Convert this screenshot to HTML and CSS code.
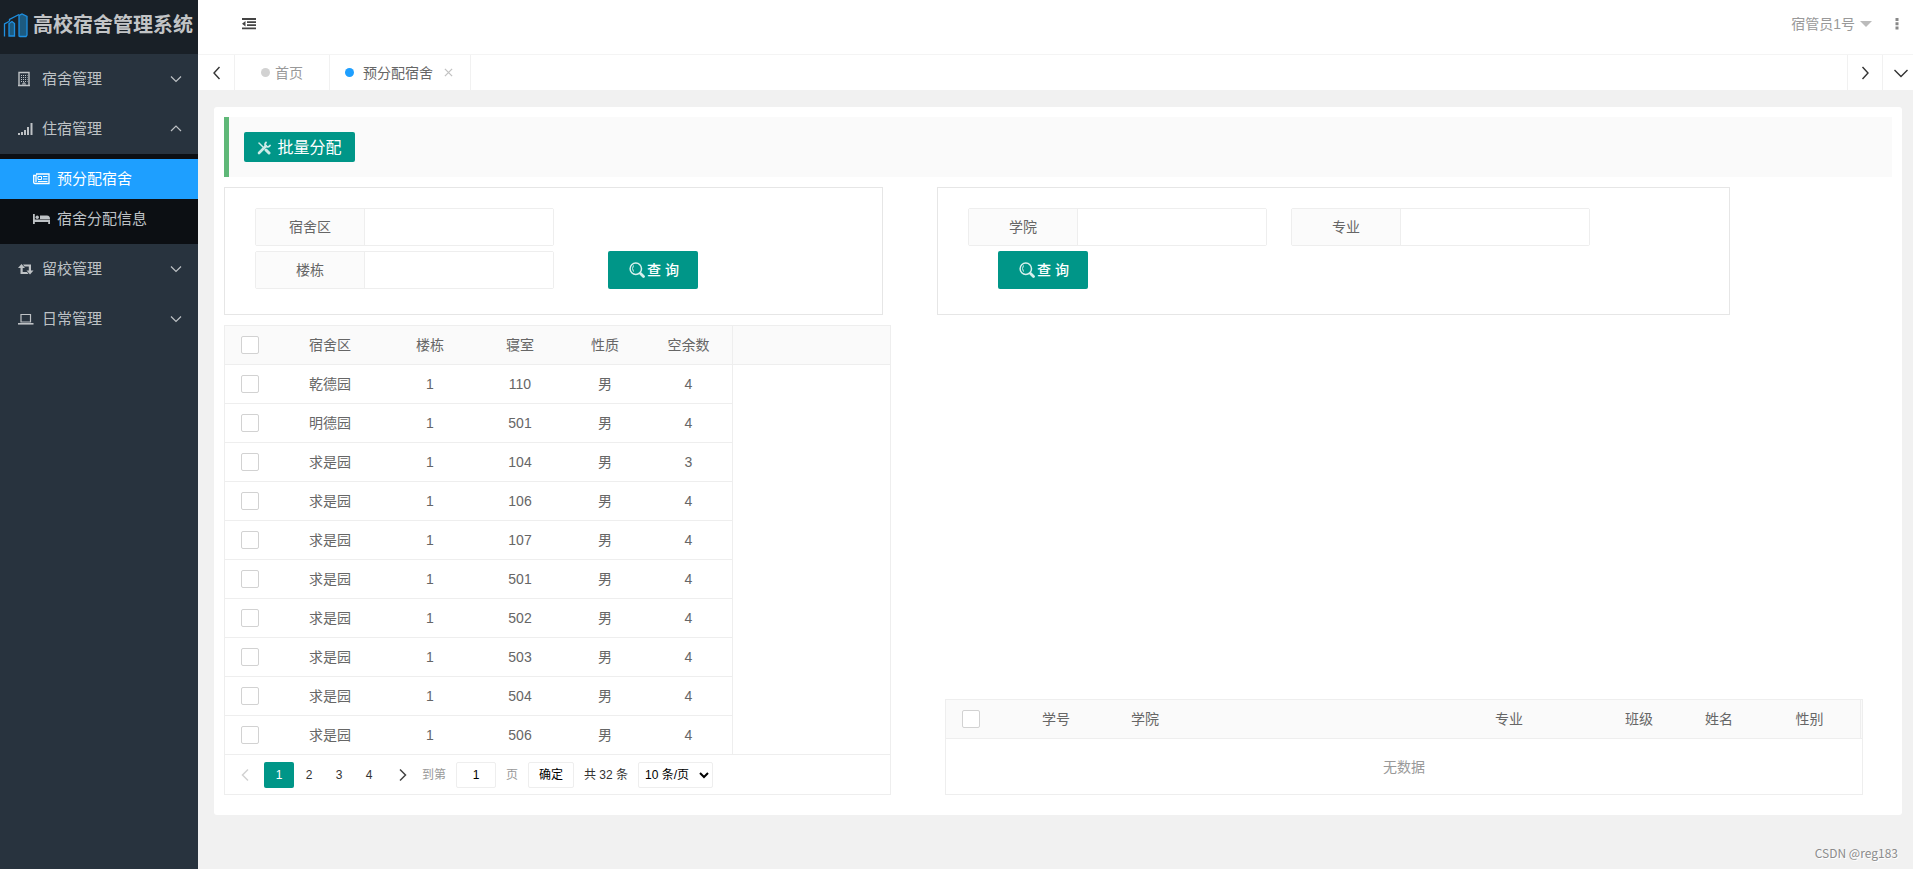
FILE: index.html
```html
<!DOCTYPE html>
<html lang="zh-CN">
<head>
<meta charset="utf-8">
<title>高校宿舍管理系统</title>
<link rel="stylesheet" href="styles.css">
</head>
<body>
<div class="app">
  <aside class="sidebar">
    <h1 class="logo">
      <svg class="logo-icon" width="26" height="26" viewBox="0 0 26 26" fill="none" stroke="#1e8fe0" stroke-width="1.3"><path d="M16 24V3.500L19 2l5 2.500V23l-1 1.500h-6z" fill="#1c5a80"/><path d="M6 24V11.500L9 9.500l2.500 2V24z" fill="#1c5a80"/><path d="M1.500 24.500V12L6 9.500M6.500 9.500V7.500L16 2.500"/></svg>
      <span>高校宿舍管理系统</span>
    </h1>
    <nav class="menu">
      <a class="menu-item" href="#">
        <svg class="menu-icon" width="16" height="16" viewBox="0 0 16 16" fill="none" stroke="currentColor"><path d="M0 14.500h12M1 14.500V1.500h10v13" stroke-width="1.400"/><path d="M3 4.500h6.500M3 6.500h6.500M3 8.500h6.500M3 10.500h6.500" stroke-dasharray="1 1" stroke-width="1"/><path d="M5 14v-2h2v2"/></svg>
        <span>宿舍管理</span>
        <svg class="menu-arrow" width="12" height="12" viewBox="0 0 12 12"><path d="M1 3.500l5 5 5-5"/></svg>
      </a>
      <a class="menu-item" href="#">
        <svg class="menu-icon" width="16" height="16" viewBox="0 0 16 16" fill="currentColor"><path d="M0 12h2v2H0zM3 11h2v3H3zM6 9h2v5H6zM9 6h2v8H9zM12.500 2h2v12h-2z"/></svg>
        <span>住宿管理</span>
        <svg class="menu-arrow" width="12" height="12" viewBox="0 0 12 12"><path d="M1 8l5-5 5 5"/></svg>
      </a>
      <div class="submenu">
        <a class="submenu-item active" href="#">
          <svg width="17" height="14" viewBox="0 0 17 14" fill="none" stroke="currentColor" stroke-width="1.300"><path d="M3 2h13v9.500H2Q.7 11.500.7 10V3.500H3V10"/><path d="M5 4.500h3.500v3H5zM10 4.500h4.500M10 7h4.500M5 9.500h9.500" stroke-width="1"/></svg>
          <span>预分配宿舍</span>
        </a>
        <a class="submenu-item" href="#">
          <svg width="17" height="14" viewBox="0 0 17 14" fill="currentColor"><path d="M0 2h1.800v5.500H17V12h-1.800v-2H1.800v2H0z"/><circle cx="4.200" cy="5.200" r="1.700"/><path d="M7 3.500h7q3 .2 3 3.500H7z"/></svg>
          <span>宿舍分配信息</span>
        </a>
      </div>
      <a class="menu-item" href="#">
        <svg class="menu-icon" width="16" height="16" viewBox="0 0 16 16" fill="currentColor"><path d="M3.500 3L7 7H4.700v4H9l1.500 2H2.500V7H0zM12 13.500L8.500 9.500h2.300v-4H6.500L5 3.500h8v6h2.500z"/></svg>
        <span>留校管理</span>
        <svg class="menu-arrow" width="12" height="12" viewBox="0 0 12 12"><path d="M1 3.500l5 5 5-5"/></svg>
      </a>
      <a class="menu-item" href="#">
        <svg class="menu-icon" width="16" height="16" viewBox="0 0 16 16" fill="none" stroke="currentColor"><path d="M3 3.500h9.500v7.500H3z" stroke-width="1.200"/><path d="M0 12.800h15.500" stroke-width="1.600"/></svg>
        <span>日常管理</span>
        <svg class="menu-arrow" width="12" height="12" viewBox="0 0 12 12"><path d="M1 3.500l5 5 5-5"/></svg>
      </a>
    </nav>
  </aside>

  <div class="main">
    <header class="topbar">
      <button class="icon-button" type="button" aria-label="收起菜单">
        <svg width="14" height="12" viewBox="0 0 14 12" fill="#444"><path d="M0 0h14v2H0zM5 3.300h9v1.700H5zM5 6.300h9V8H5zM0 9.500h14v1.800H0zM0 5.700L3.500 3v5.400z"/></svg>
      </button>
      <div class="user-area">
        <a class="user" href="#">宿管员1号 <span class="caret"></span></a>
        <button class="icon-button" type="button" aria-label="更多">
          <svg width="4" height="12" viewBox="0 0 4 12" fill="#888"><path d="M.5 0h3v3h-3zM.5 4.300h3v3h-3zM.5 8.600h3v3h-3z"/></svg>
        </button>
      </div>
    </header>
    <div class="tabs">
      <button class="tab-control" type="button" aria-label="向左"><svg width="14" height="14" viewBox="0 0 14 14"><path d="M10.500 1L5 7l5.500 6"/></svg></button>
      <a class="tab" href="#"><span class="dot"></span>首页</a>
      <a class="tab current" href="#"><span class="dot"></span><span>预分配宿舍</span><svg class="tab-close" width="9" height="9" viewBox="0 0 10 10"><path d="M1 1l8 8M9 1L1 9"/></svg></a>
      <button class="tab-control push" type="button" aria-label="向右"><svg width="14" height="14" viewBox="0 0 14 14"><path d="M4.500 1L10 7l-5.500 6"/></svg></button>
      <button class="tab-control last" type="button" aria-label="标签操作"><svg width="16" height="14" viewBox="0 0 16 14"><path d="M1.500 4L8 10.500 14.500 4"/></svg></button>
    </div>

    <main class="content">
      <section class="card">
        <div class="toolbar">
          <button class="btn btn-small" type="button">
            <svg width="14" height="14" viewBox="0 0 14 14" fill="none" stroke="#cdebe7" stroke-linecap="round"><path d="M2 2l4 4" stroke-width="1.500"/><path d="M9 9l3 3" stroke-width="3"/><path d="M2 12l7-7" stroke-width="2.600"/><path d="M9 1.500Q7 3.500 9 5.200Q11 7 13 4.500" stroke-width="1.800"/></svg>
            批量分配
          </button>
        </div>

        <div class="filters">
          <form class="filter-box">
            <div class="filter-row">
              <div class="field"><label for="area">宿舍区</label><input id="area" type="text"></div>
            </div>
            <div class="filter-row with-button">
              <div class="field"><label for="building">楼栋</label><input id="building" type="text"></div>
              <button class="btn" type="button"><svg width="16" height="16" viewBox="0 0 16 16" fill="none" stroke="#d8f0ed"><circle cx="6.800" cy="6.800" r="5.700" stroke-width="1.500"/><path d="M4.500 3.500Q2.500 6.500 4.500 9.500" stroke-width="1"/><path d="M11.500 11.500l3 3" stroke-width="2.800" stroke-linecap="round"/></svg>查 询</button>
            </div>
          </form>
          <form class="filter-box">
            <div class="filter-row">
              <div class="field"><label for="college">学院</label><input id="college" type="text"></div>
              <div class="field"><label for="major">专业</label><input id="major" type="text"></div>
            </div>
            <div class="filter-row indented">
              <button class="btn" type="button"><svg width="16" height="16" viewBox="0 0 16 16" fill="none" stroke="#d8f0ed"><circle cx="6.800" cy="6.800" r="5.700" stroke-width="1.500"/><path d="M4.500 3.500Q2.500 6.500 4.500 9.500" stroke-width="1"/><path d="M11.500 11.500l3 3" stroke-width="2.800" stroke-linecap="round"/></svg>查 询</button>
            </div>
          </form>
        </div>

        <div class="tables">
          <div class="table-box">
            <table>
              <colgroup><col class="w-check"><col class="w-area"><col class="w-90"><col class="w-90"><col class="w-80"><col class="w-free"><col></colgroup>
              <thead>
                <tr><th><input type="checkbox" aria-label="全选"></th><th>宿舍区</th><th>楼栋</th><th>寝室</th><th>性质</th><th class="edge">空余数</th><td class="filler"></td></tr>
              </thead>
              <tbody>
                <tr><td><input type="checkbox" aria-label="选择 110"></td><td>乾德园</td><td>1</td><td>110</td><td>男</td><td class="edge">4</td><td class="filler"></td></tr>
                <tr><td><input type="checkbox" aria-label="选择 501"></td><td>明德园</td><td>1</td><td>501</td><td>男</td><td class="edge">4</td><td class="filler"></td></tr>
                <tr><td><input type="checkbox" aria-label="选择 104"></td><td>求是园</td><td>1</td><td>104</td><td>男</td><td class="edge">3</td><td class="filler"></td></tr>
                <tr><td><input type="checkbox" aria-label="选择 106"></td><td>求是园</td><td>1</td><td>106</td><td>男</td><td class="edge">4</td><td class="filler"></td></tr>
                <tr><td><input type="checkbox" aria-label="选择 107"></td><td>求是园</td><td>1</td><td>107</td><td>男</td><td class="edge">4</td><td class="filler"></td></tr>
                <tr><td><input type="checkbox" aria-label="选择 501"></td><td>求是园</td><td>1</td><td>501</td><td>男</td><td class="edge">4</td><td class="filler"></td></tr>
                <tr><td><input type="checkbox" aria-label="选择 502"></td><td>求是园</td><td>1</td><td>502</td><td>男</td><td class="edge">4</td><td class="filler"></td></tr>
                <tr><td><input type="checkbox" aria-label="选择 503"></td><td>求是园</td><td>1</td><td>503</td><td>男</td><td class="edge">4</td><td class="filler"></td></tr>
                <tr><td><input type="checkbox" aria-label="选择 504"></td><td>求是园</td><td>1</td><td>504</td><td>男</td><td class="edge">4</td><td class="filler"></td></tr>
                <tr><td><input type="checkbox" aria-label="选择 506"></td><td>求是园</td><td>1</td><td>506</td><td>男</td><td class="edge">4</td><td class="filler"></td></tr>
              </tbody>
            </table>
            <div class="pager">
              <div class="pages">
                <a class="page-arrow disabled" href="#" aria-label="上一页"><svg width="14" height="14" viewBox="0 0 14 14"><path d="M10 1.500L4.500 7l5.500 5.500"/></svg></a>
                <a class="page current" href="#">1</a>
                <a class="page" href="#">2</a>
                <a class="page" href="#">3</a>
                <a class="page" href="#">4</a>
                <a class="page-arrow" href="#" aria-label="下一页"><svg width="14" height="14" viewBox="0 0 14 14"><path d="M4 1.500L9.500 7 4 12.500"/></svg></a>
              </div>
              <div class="page-tools">
                <label class="muted" for="goto">到第</label>
                <input class="page-input" id="goto" type="text" value="1">
                <span class="muted">页</span>
                <button class="page-button" type="button">确定</button>
                <span>共 32 条</span>
                <select class="page-select" aria-label="每页条数"><option>10 条/页</option></select>
              </div>
            </div>
          </div>

          <div class="table-box lower">
            <table>
              <colgroup><col class="w-check"><col class="w-id"><col><col class="w-major"><col class="w-80"><col class="w-80"><col class="w-sex"><col class="w-rest"></colgroup>
              <thead>
                <tr><th><input type="checkbox" aria-label="全选学生"></th><th>学号</th><th class="left">学院</th><th>专业</th><th>班级</th><th>姓名</th><th class="edge">性别</th><td class="filler"></td></tr>
              </thead>
            </table>
            <p class="empty">无数据</p>
          </div>
        </div>
      </section>
      <p class="watermark">CSDN @reg183</p>
    </main>
  </div>
</div>
</body>
</html>
```

FILE: styles.css
```css
* {
  box-sizing: border-box;
}

body {
  margin: 0;
  font: 14px/24px "Liberation Sans", "Noto Sans CJK SC", sans-serif;
  color: #333;
  background: #f1f1f1;
}

a {
  color: inherit;
  text-decoration: none;
}

button,
input,
select {
  margin: 0;
  font: inherit;
}

button {
  cursor: pointer;
}

.app {
  display: flex;
  min-height: 100vh;
}

/* Sidebar */
.sidebar {
  flex: 0 0 198px;
  background: #28333e;
  color: #bec2c5;
}

.logo {
  display: flex;
  align-items: center;
  gap: 4px;
  height: 54px;
  margin: 0;
  padding: 0 3px 4px;
  background: #192027;
  color: #c2c4c6;
  font-size: 20px;
  font-weight: 700;
  white-space: nowrap;
}

.logo-icon {
  flex: none;
}

.menu-item {
  display: flex;
  align-items: center;
  height: 50px;
  padding: 0 16px 0 18px;
  font-size: 15px;
}

.menu-icon {
  margin-right: 8px;
}

.menu-arrow {
  margin-left: auto;
  fill: none;
  stroke: currentColor;
  stroke-width: 1.2;
}

.submenu {
  padding: 5px 0;
  background: #0c0f13;
}

.submenu-item {
  display: flex;
  align-items: center;
  gap: 7px;
  height: 40px;
  padding-left: 33px;
  font-size: 15px;
}

.submenu-item.active {
  background: #1e9fff;
  color: #fff;
}

/* Header and tabs */
.main {
  display: flex;
  flex: 1;
  flex-direction: column;
  min-width: 0;
}

.topbar {
  display: flex;
  align-items: center;
  justify-content: space-between;
  height: 55px;
  padding: 0 14px 6px 44px;
  border-bottom: 1px solid #f4f4f4;
  background: #fff;
}

.icon-button {
  display: flex;
  padding: 0;
  border: 0;
  background: none;
}

.user-area {
  display: flex;
  align-items: center;
  gap: 23px;
}

.user {
  display: flex;
  align-items: center;
  gap: 5px;
  color: #999;
}

.caret {
  border: 6px solid transparent;
  border-top-color: #bbb;
  border-bottom: 0;
}

.tabs {
  display: flex;
  height: 36px;
  border-bottom: 1px solid #f1f1f1;
  background: #fff;
}

.tab-control {
  display: flex;
  align-items: center;
  justify-content: center;
  width: 37px;
  padding: 0;
  border: 0;
  border-right: 1px solid #f1f1f1;
  background: none;
}

.tab-control svg,
.tab-close {
  fill: none;
  stroke: #333;
  stroke-width: 1.4;
}

.tab-control.push {
  width: 36px;
  margin-left: auto;
  border-left: 1px solid #f1f1f1;
}

.tab-control.last {
  width: 30px;
  padding-left: 6px;
  border-right: 0;
}

.tab {
  display: flex;
  align-items: center;
  gap: 5px;
  padding: 0 26px;
  border-right: 1px solid #f1f1f1;
  color: #999;
}

.tab.current {
  gap: 9px;
  padding: 0 17px 0 15px;
  color: #666;
}

.dot {
  width: 9px;
  height: 9px;
  border-radius: 50%;
  background: #d2d2d2;
}

.current .dot {
  background: #1e9fff;
}

.tab .tab-close {
  margin-left: 2px;
  stroke: #c2c2c2;
}

/* Content */
.content {
  display: flex;
  flex: 1;
  flex-direction: column;
  justify-content: space-between;
  padding: 16px 11px 4px 16px;
}

.card {
  padding: 10px 10px 20px;
  border-radius: 3px;
  background: #fff;
}

.toolbar {
  padding: 15px;
  border-left: 5px solid #5fb878;
  background: #fafafa;
}

.btn {
  display: inline-flex;
  align-items: center;
  justify-content: center;
  gap: 2px;
  width: 90px;
  height: 38px;
  padding: 0 0 0 2px;
  border: 0;
  border-radius: 2px;
  background: #009688;
  color: #fff;
  font-weight: 500;
}

.btn-small {
  gap: 6px;
  width: 111px;
  height: 30px;
  padding: 2px 0 0;
  font-size: 16px;
  font-weight: 400;
  vertical-align: top;
}

.filters {
  display: grid;
  grid-template-columns: minmax(0, 659fr) minmax(0, 793fr) minmax(0, 108fr);
  column-gap: 54px;
  margin-top: 10px;
}

.filter-box {
  display: flex;
  flex-direction: column;
  gap: 5px;
  padding: 20px 30px 25px;
  border: 1px solid #e6e6e6;
}

.filter-row {
  display: flex;
  gap: 24px;
}

.filter-row.with-button {
  gap: 54px;
}

.filter-row.indented {
  padding-left: 30px;
}

.field {
  display: flex;
  width: 299px;
  height: 38px;
  border: 1px solid #eee;
  border-radius: 2px;
}

.field label {
  flex: 0 0 109px;
  border-right: 1px solid #eee;
  background: #fbfbfb;
  color: #666;
  line-height: 36px;
  text-align: center;
}

.field input {
  flex: 1;
  min-width: 0;
  padding: 0 10px;
  border: 0;
  outline: 0;
  background: #fff;
}

/* Tables */
.tables {
  display: grid;
  grid-template-columns: minmax(0, 667fr) minmax(0, 918fr);
  column-gap: 54px;
  margin-top: 10px;
  padding-right: 29px;
}

.table-box {
  border: 1px solid #eee;
}

.table-box.lower {
  align-self: end;
}

table {
  width: 100%;
  border-collapse: separate;
  border-spacing: 0;
  table-layout: fixed;
  color: #666;
  text-align: center;
}

th,
td {
  height: 39px;
  padding: 0;
  border-bottom: 1px solid #eee;
  font-weight: 400;
}

thead {
  background: #fafafa;
}

tbody .filler,
tbody tr:last-child td {
  border-bottom: 0;
}

tbody tr:last-child td {
  height: 38px;
}

.edge {
  border-right: 1px solid #eee;
}

.left {
  padding-left: 15px;
  text-align: left;
}

.w-check { width: 50px; }
.w-area { width: 110px; }
.w-90 { width: 90px; }
.w-80 { width: 80px; }
.w-free { width: 88px; }
.w-id { width: 120px; }
.w-major { width: 180px; }
.w-sex { width: 102px; }
.w-rest { width: 1px; }

input[type="checkbox"] {
  display: block;
  width: 18px;
  height: 18px;
  margin: 0 auto;
  border: 1px solid #d2d2d2;
  border-radius: 2px;
  appearance: none;
  background: #fff;
}

input[type="checkbox"]:checked {
  background: #5fb878;
}

.empty {
  margin: 0;
  padding: 16px 0 15px;
  color: #999;
  text-align: center;
}

/* Pagination */
.pager {
  display: flex;
  align-items: center;
  height: 40px;
  padding: 0 1px;
  border-top: 1px solid #eee;
  font-size: 12px;
}

.pages,
.page-tools {
  display: flex;
  align-items: center;
}

.page-tools {
  gap: 10px;
}

.page,
.page-arrow {
  display: flex;
  align-items: center;
  justify-content: center;
  width: 30px;
  height: 26px;
}

.page-arrow {
  width: 38px;
}

.page.current {
  border-radius: 2px;
  background: #009688;
  color: #fff;
}

.page-arrow svg {
  fill: none;
  stroke: #444;
  stroke-width: 1.5;
}

.page-arrow.disabled svg {
  stroke: #d2d2d2;
}

.muted {
  color: #999;
}

.page-input,
.page-button,
.page-select {
  height: 26px;
  border: 1px solid #eee;
  border-radius: 2px;
  background: #fff;
}

.page-input {
  width: 40px;
  padding: 0;
  text-align: center;
}

.page-button {
  width: 46px;
  padding: 0;
  color: #000;
}

.page-select {
  width: 75px;
  padding: 0 2px;
  color: #000;
}

.watermark {
  margin: 0 14px 0 0;
  margin-right: 4px;
  color: #8c8c8c;
  font-family: "Noto Sans CJK SC", sans-serif;
  font-size: 12px;
  text-align: right;
  text-shadow: 1px 1px 0 #fff;
}
```
